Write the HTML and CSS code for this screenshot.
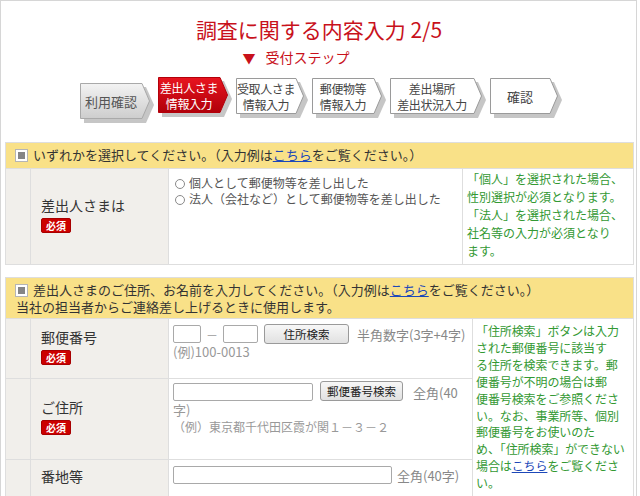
FILE: index.html
```html
<!DOCTYPE html>
<html lang="ja">
<head>
<meta charset="utf-8">
<title>調査に関する内容入力 2/5</title>
<link rel="stylesheet" href="styles.css">
</head>
<body>
<div class="page">
  <h1 class="title">調査に関する内容入力 2/5</h1>
  <p class="sub"><span class="tri">▼</span>受付ステップ</p>

  <ol class="steps">
    <li class="step step-done w70">
      <svg class="shape" width="76" height="42" viewBox="0 0 76 42">
        <defs>
          <linearGradient id="gGray" x1="0" y1="0" x2="0" y2="1">
            <stop offset="0" stop-color="#f3f3f3"/>
            <stop offset="1" stop-color="#cdcdcd"/>
          </linearGradient>
        </defs>
        <polygon class="shadow" points="4,4 66,4 74,22 66,40 4,40"/>
        <polygon fill="url(#gGray)" stroke="#a9a9a9" points="0.5,0.5 62,0.5 69.5,18 62,35.5 0.5,35.5"/>
      </svg>
      <span class="label lg">利用確認</span>
    </li>
    <li class="step step-now w70">
      <svg class="shape" width="76" height="42" viewBox="0 0 76 42">
        <defs>
          <linearGradient id="gRed" x1="0" y1="0" x2="0" y2="1">
            <stop offset="0" stop-color="#e8141f"/>
            <stop offset="1" stop-color="#b0000a"/>
          </linearGradient>
        </defs>
        <polygon class="shadow" points="4,4 66,4 74,22 66,40 4,40"/>
        <polygon fill="url(#gRed)" stroke="#b3000a" points="0.5,0.5 62,0.5 69.5,18 62,35.5 0.5,35.5"/>
      </svg>
      <span class="label">差出人さま<br>情報入力</span>
    </li>
    <li class="step w68">
      <svg class="shape" width="74" height="42" viewBox="0 0 74 42">
        <polygon class="shadow" points="4,4 64,4 72,22 64,40 4,40"/>
        <polygon class="plain" points="0.5,0.5 60,0.5 67.5,18 60,35.5 0.5,35.5"/>
      </svg>
      <span class="label">受取人さま<br>情報入力</span>
    </li>
    <li class="step w70">
      <svg class="shape" width="76" height="42" viewBox="0 0 76 42">
        <polygon class="shadow" points="4,4 66,4 74,22 66,40 4,40"/>
        <polygon class="plain" points="0.5,0.5 62,0.5 69.5,18 62,35.5 0.5,35.5"/>
      </svg>
      <span class="label">郵便物等<br>情報入力</span>
    </li>
    <li class="step w92">
      <svg class="shape" width="98" height="42" viewBox="0 0 98 42">
        <polygon class="shadow" points="4,4 88,4 96,22 88,40 4,40"/>
        <polygon class="plain" points="0.5,0.5 84,0.5 91.5,18 84,35.5 0.5,35.5"/>
      </svg>
      <span class="label">差出場所<br>差出状況入力</span>
    </li>
    <li class="step w68">
      <svg class="shape" width="74" height="42" viewBox="0 0 74 42">
        <polygon class="shadow" points="4,4 64,4 72,22 64,40 4,40"/>
        <polygon class="plain" points="0.5,0.5 60,0.5 67.5,18 60,35.5 0.5,35.5"/>
      </svg>
      <span class="label lg">確認</span>
    </li>
  </ol>

  <table class="form form-a">
    <colgroup><col class="c-gut"><col class="c-lab"><col class="c-fa"><col class="c-na"></colgroup>
    <tr>
      <td class="head" colspan="4"><span class="sq"></span>いずれかを選択してください。（入力例は<a href="#">こちら</a>をご覧ください。）</td>
    </tr>
    <tr class="r-kind">
      <td class="gut"></td>
      <th class="lab">差出人さまは<br><span class="req">必須</span></th>
      <td class="field radios">
        <div><span class="radio"></span>個人として郵便物等を差し出した</div>
        <div><span class="radio"></span>法人（会社など）として郵便物等を差し出した</div>
      </td>
      <td class="note note-a">「個人」を選択された場合、<br>性別選択が必須となります。<br>「法人」を選択された場合、<br>社名等の入力が必須となり<br>ます。</td>
    </tr>
  </table>

  <table class="form form-b">
    <colgroup><col class="c-gut"><col class="c-lab"><col class="c-fb"><col class="c-nb"></colgroup>
    <tr>
      <td class="head" colspan="4"><span class="sq"></span>差出人さまのご住所、お名前を入力してください。（入力例は<a href="#">こちら</a>をご覧ください。）<br>当社の担当者からご連絡差し上げるときに使用します。</td>
    </tr>
    <tr class="r-zip">
      <td class="gut"></td>
      <th class="lab">郵便番号<br><span class="req">必須</span></th>
      <td class="field">
        <div class="line">
          <input class="txt zip1" type="text"><span class="dash">－</span><input class="txt zip2" type="text"><button class="btn btn-zip" type="button">住所検索</button><span class="hint">半角数字(3字+4字)</span>
        </div>
        <div class="ex ex-zip">(例)100-0013</div>
      </td>
      <td class="note note-b" rowspan="3">「住所検索」ボタンは入力<br>された郵便番号に該当す<br>る住所を検索できます。郵<br>便番号が不明の場合は郵<br>便番号検索をご参照くださ<br>い。なお、事業所等、個別<br>郵便番号をお使いのた<br>め、「住所検索」ができない<br>場合は<a href="#">こちら</a>をご覧くださ<br>い。</td>
    </tr>
    <tr class="r-addr">
      <td class="gut"></td>
      <th class="lab">ご住所<br><span class="req">必須</span></th>
      <td class="field">
        <div class="line">
          <input class="txt addr" type="text"><button class="btn btn-post" type="button">郵便番号検索</button><span class="hint">全角(40</span>
        </div>
        <div class="ex ex-wrap">字)</div>
        <div class="ex">（例）東京都千代田区霞が関１－３－２</div>
      </td>
    </tr>
    <tr class="r-ban">
      <td class="gut"></td>
      <th class="lab">番地等</th>
      <td class="field">
        <div class="line">
          <input class="txt ban" type="text"><span class="hint">全角(40字)</span>
        </div>
      </td>
    </tr>
  </table>
</div>
</body>
</html>
```
FILE: styles.css
```css
* { box-sizing: border-box; }
html, body { margin: 0; padding: 0; background: #fff; }
body {
  font-family: "Noto Sans CJK JP", "Noto Sans", "Liberation Sans", sans-serif;
  color: #333;
  overflow: hidden;
}
.page {
  width: 637px;
  min-height: 496px;
  border: 1px solid #d6d6d6;
  border-bottom: none;
  padding: 0 3px 0 4px;
}
.title {
  margin: 0;
  padding-top: 14px;
  font-size: 21px;
  line-height: 28px;
  font-weight: normal;
  text-align: center;
  color: #c8111b;
}
.sub {
  margin: 5px 0 0;
  padding-right: 46px;
  font-size: 14px;
  line-height: 18px;
  text-align: center;
  color: #c8111b;
}
.tri { margin-right: 10px; font-size: 13px; }

/* steps */
.steps {
  list-style: none;
  margin: 11px 0 0;
  padding: 0 0 0 75px;
  display: flex;
  gap: 8px;
  height: 46px;
}
.step {
  position: relative;
  height: 36px;
}
.step.w70 { width: 70px; }
.step.w68 { width: 68px; }
.step.w92 { width: 92px; }
.step-done { margin-top: 5px; }
.step-now { margin-top: -1px; }
.shape {
  position: absolute;
  left: 0;
  top: 0;
  overflow: visible;
}
.shape .shadow { fill: #c6c6c6; }
.shape .plain { fill: #fff; stroke: #9a9a9a; }
.label {
  position: relative;
  display: flex;
  align-items: center;
  justify-content: center;
  height: 36px;
  padding-right: 8px;
  padding-top: 1px;
  font-size: 12px;
  line-height: 16px;
  letter-spacing: -0.4px;
  text-align: center;
  color: #444;
}
.label.lg { font-size: 13px; letter-spacing: 0; }
.step-done .label { color: #555; }
.step-now .label { color: #fff; }

/* forms */
.form {
  width: 628px;
  border-collapse: collapse;
  table-layout: fixed;
  border: 1px solid #dcdcdc;
  margin-top: 18px;
}
.form-b { margin-top: 12px; }
.c-gut { width: 25px; }
.c-lab { width: 138px; }
.c-fa { width: 294px; }
.c-na { width: 171px; }
.c-fb { width: 304px; }
.c-nb { width: 161px; }

.form td, .form th {
  border: 1px solid #dedede;
  padding: 0;
}
.head {
  background: #f9e188;
  padding: 3px 10px 4px !important;
  font-size: 13px;
  line-height: 18px;
  color: #333;
  text-align: left;
}
.form-b .head { line-height: 17px; padding: 3px 10px 3px !important; }
.sq {
  display: inline-block;
  width: 11px;
  height: 11px;
  background: #858585;
  border: 2px solid #fff;
  box-shadow: 0 0 0 1px #b5b5b5;
  margin-right: 6px;
  vertical-align: -1px;
}
a { color: #1d48b8; text-decoration: underline; }

.gut { background: #f1efeb; }
.lab {
  background: #f1efeb;
  text-align: left;
  font-weight: normal;
  font-size: 14px;
  line-height: 19px;
  color: #333;
  vertical-align: middle;
  padding: 0 10px 4px !important;
}
.req {
  display: inline-block;
  margin-top: 1px;
  background: #cc0000;
  border: 1px solid #a80000;
  border-radius: 2px;
  color: #fff;
  font-size: 10px;
  font-weight: bold;
  line-height: 13px;
  padding: 0 4px;
  letter-spacing: 0;
}

.field {
  vertical-align: top;
  padding: 5px 4px 0 !important;
  font-size: 12px;
  color: #888;
  background: #fff;
}
.radios { padding: 6px 6px 0 !important; color: #555; line-height: 16px; }
.radio {
  display: inline-block;
  width: 10px;
  height: 10px;
  border: 1px solid #8a8a8a;
  border-radius: 50%;
  margin-right: 4px;
  vertical-align: -1px;
}
.note {
  vertical-align: top;
  font-size: 12px;
  color: #339933;
  background: #fff;
}
.note-a { padding: 1px 4px 4px !important; line-height: 18px; }
.note-b { padding: 4px 3px 4px 3px !important; line-height: 16.9px; letter-spacing: -0.1px; }

.r-zip { height: 60px; }
.r-addr { height: 81px; }
.r-addr .field { padding-top: 3px !important; }

.line {
  display: flex;
  align-items: center;
  height: 20px;
}
.txt {
  height: 18px;
  border: 1px solid #a9a9a9;
  border-radius: 2px;
  background: #fff;
  padding: 0;
  margin: 0;
}
.zip1 { width: 28px; }
.zip2 { width: 35px; margin-right: 6px; }
.addr { width: 140px; margin-right: 7px; }
.ban { width: 219px; margin-right: 5px; }
.dash { width: 22px; text-align: center; color: #999; }
.btn {
  height: 20px;
  padding: 0;
  margin: 0;
  border: 1px solid #9a9a9a;
  border-radius: 3px;
  background: linear-gradient(#f7f7f7, #e1e1e1);
  color: #222;
  font-family: "Noto Sans CJK JP", sans-serif;
  font-size: 11.5px;
  line-height: 18px;
}
.btn-zip { width: 85px; margin-right: 8px; }
.btn-post { width: 83px; margin-right: 10px; margin-top: -3px; }
.hint { color: #888; font-size: 13px; white-space: nowrap; }
.ex { color: #999; font-size: 12px; line-height: 16px; margin-top: 1px; }
.ex-zip { font-size: 13px; margin-top: 0; }
.ex-wrap { font-size: 13px; margin-top: 0; }
```
